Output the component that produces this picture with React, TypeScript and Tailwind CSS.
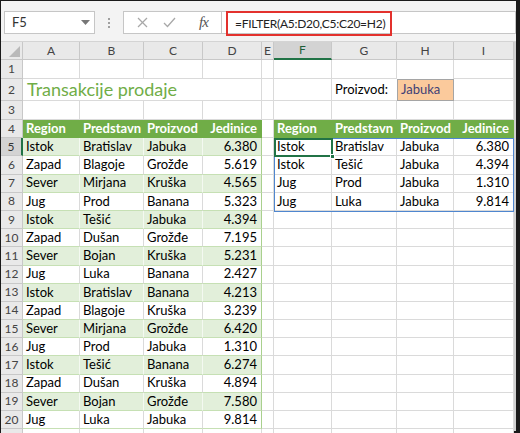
import React from "react"

const colW = [
  "w-[57px]",
  "w-[64px]",
  "w-[59px]",
  "w-[59px]",
  "w-[12px]",
  "w-[58px]",
  "w-[65px]",
  "w-[57px]",
  "w-[60px]",
]
const letters = ["A", "B", "C", "D", "E", "F", "G", "H", "I"]

const sales = [
  ["Istok", "Bratislav", "Jabuka", "6.380"],
  ["Zapad", "Blagoje", "Grožđe", "5.619"],
  ["Sever", "Mirjana", "Kruška", "4.565"],
  ["Jug", "Prod", "Banana", "5.323"],
  ["Istok", "Tešić", "Jabuka", "4.394"],
  ["Zapad", "Dušan", "Grožđe", "7.195"],
  ["Sever", "Bojan", "Kruška", "5.231"],
  ["Jug", "Luka", "Banana", "2.427"],
  ["Istok", "Bratislav", "Banana", "4.213"],
  ["Zapad", "Blagoje", "Kruška", "3.239"],
  ["Sever", "Mirjana", "Grožđe", "6.420"],
  ["Jug", "Prod", "Jabuka", "1.310"],
  ["Istok", "Tešić", "Banana", "6.274"],
  ["Zapad", "Dušan", "Kruška", "4.894"],
  ["Sever", "Bojan", "Grožđe", "7.580"],
  ["Jug", "Luka", "Jabuka", "9.814"],
]

const filtered = sales.filter((r) => r[2] === "Jabuka")

// header text is cut by the next column in the sheet, so only the visible part
const headers = ["Region", "Predstavn", "Proizvod", "Jedinice"]

function RowHead({ n, selected }: { n?: number; selected?: boolean }) {
  return (
    <div
      className={
        selected
          ? "w-[22px] shrink-0 flex items-center justify-center bg-[#d3d3d3] border-b border-b-[#c8c8c8] border-r-2 border-r-[#217346] text-[#333] text-[12px]"
          : "w-[22px] shrink-0 flex items-center justify-center bg-[#e9e9e9] border-b border-r border-b-[#c8c8c8] border-r-[#c8c8c8] text-[#444] text-[12px]"
      }
    >
      {n}
    </div>
  )
}

function Cell({
  i,
  cls = "bg-white border-r-[#dadada] border-b-[#dadada]",
  right,
  bottom,
  children,
}: {
  i: number
  cls?: string
  right?: boolean
  bottom?: boolean
  children?: React.ReactNode
}) {
  return (
    <div
      className={`${colW[i]} shrink-0 flex border-r border-b whitespace-nowrap overflow-hidden ${
        bottom ? "items-end pb-[1px]" : "items-center"
      } ${right ? "justify-end pr-[4px]" : "pl-[3px]"} ${cls}`}
    >
      {children}
    </div>
  )
}

function Row({ h, children }: { h: string; children: React.ReactNode }) {
  return <div className={`flex ${h}`}>{children}</div>
}

export default function App() {
  return (
    <div className="w-[520px] h-[433px] overflow-hidden bg-[#1a1a1a] pl-px pt-px pr-[4px] pb-[2px] font-['Lato','Liberation_Sans',sans-serif] text-[13px] text-black">
      <div className="bg-white h-full flex flex-col">
        {/* formula bar */}
        <div className="h-[41px] shrink-0 bg-[#f3f3f3] border-b border-[#d4d4d4] flex items-start pt-[10px] pl-[3px]">
          <div className="w-[91px] h-[23px] bg-white border border-[#c6c6c6] flex items-center justify-between pl-[7px] pr-[4px] text-[#333]">
            <span>F5</span>
            <svg width="9" height="5" viewBox="0 0 9 5">
              <polygon points="0,0 9,0 4.5,5" fill="#777" />
            </svg>
          </div>
          <div className="w-[28px] h-[23px] flex flex-col items-center justify-center gap-[2px]">
            <span className="w-[2px] h-[2px] bg-[#a0a0a0]" />
            <span className="w-[2px] h-[2px] bg-[#a0a0a0]" />
            <span className="w-[2px] h-[2px] bg-[#a0a0a0]" />
          </div>
          <div className="w-[99px] h-[23px] bg-white border border-[#c6c6c6] flex items-center pl-[13px] gap-[15px]">
            <svg width="11" height="11" viewBox="0 0 11 11" stroke="#a8a8a8" strokeWidth="1.3">
              <line x1="1" y1="1" x2="10" y2="10" />
              <line x1="10" y1="1" x2="1" y2="10" />
            </svg>
            <svg width="13" height="11" viewBox="0 0 13 11" fill="none" stroke="#a8a8a8" strokeWidth="1.3">
              <polyline points="1,6 4.5,9.5 12,1" />
            </svg>
            <span className="ml-[8px] font-['Liberation_Serif',serif] italic text-[15px] text-[#555] tracking-[-1px]">fx</span>
          </div>
          <div className="flex-1 h-[23px] bg-white border border-l-0 border-[#c6c6c6] flex items-start pl-[4px]">
            <div className="w-[166px] h-[25px] -mt-px border-2 border-[#e3312d] flex items-center pl-[7px] text-[12px] tracking-[-0.25px] text-[#222]">
              =FILTER(A5:D20,C5:C20=H2)
            </div>
          </div>
        </div>

        <div className="flex flex-1 min-h-0">
          <div className="relative w-[513px] shrink-0">
            {/* column headers */}
            <Row h="h-[18px]">
              <div className="w-[22px] shrink-0 bg-[#e9e9e9] border-r border-b border-[#c8c8c8] flex items-end justify-end p-[2px]">
                <svg width="11" height="11" viewBox="0 0 11 11">
                  <polygon points="11,0 11,11 0,11" fill="#b9b9b9" />
                </svg>
              </div>
              {letters.map((l, i) => (
                <div
                  key={l}
                  className={`${colW[i]} shrink-0 flex items-center justify-center text-[12px] ${
                    l === "F"
                      ? "bg-[#d3d3d3] border-r border-r-[#c8c8c8] border-b-2 border-b-[#217346] text-[#1e5e38]"
                      : "bg-[#e9e9e9] border-r border-b border-[#c8c8c8] text-[#444]"
                  }`}
                >
                  {l}
                </div>
              ))}
            </Row>

            {/* row 1 */}
            <Row h="h-[19px]">
              <RowHead n={1} />
              {letters.map((l, i) => (
                <Cell key={l} i={i} cls={l === "H" ? "bg-white border-r-[#dadada] border-b-0" : undefined} />
              ))}
            </Row>

            {/* row 2 */}
            <Row h="h-[22px]">
              <RowHead n={2} />
              <div className="w-[180px] shrink-0 flex items-end pl-[4px] border-b border-[#dadada] text-[#70ad47] text-[18px] leading-[22px] whitespace-nowrap">
                Transakcije prodaje
              </div>
              <Cell i={3} />
              <Cell i={4} />
              <Cell i={5} />
              <Cell i={6} bottom cls="bg-white border-r-0 border-b-[#dadada]">
                Proizvod:
              </Cell>
              <Cell i={7} bottom cls="bg-[#fbca9c] border-l border-t border-[#a5a5a5] text-[#3f3f76]">
                Jabuka
              </Cell>
              <Cell i={8} />
            </Row>

            {/* row 3 */}
            <Row h="h-[19px]">
              <RowHead n={3} />
              {letters.map((l, i) => (
                <Cell key={l} i={i} />
              ))}
            </Row>

            {/* row 4 - table headers */}
            <Row h="h-[18.2px]">
              <RowHead n={4} />
              {headers.map((t, i) => (
                <Cell key={"l" + t} i={i} right={i === 3} cls="bg-[#70ad47] border-r-[#70ad47] border-b-[#70ad47] text-white font-bold">
                  {t}
                </Cell>
              ))}
              <Cell i={4} />
              {headers.map((t, i) => (
                <Cell key={"r" + t} i={i + 5} right={i === 3} cls="bg-[#70ad47] border-r-[#70ad47] border-b-[#70ad47] text-white font-bold">
                  {t}
                </Cell>
              ))}
            </Row>

            {/* rows 5-20 */}
            {sales.map((r, idx) => {
              const band = idx % 2 === 0
              const res = filtered[idx]
              return (
                <Row key={idx} h="h-[18.2px]">
                  <RowHead n={idx + 5} selected={idx === 0} />
                  {r.map((v, i) => (
                    <Cell
                      key={i}
                      i={i}
                      right={i === 3}
                      cls={
                        i === 3
                          ? band
                            ? "bg-[#e2efda] border-r-[#a9d08e] border-b-[#c6e0b4]"
                            : "bg-white border-r-[#a9d08e] border-b-[#c6e0b4]"
                          : band
                          ? "bg-[#e2efda] border-r-[#f4f9f1] border-b-[#c6e0b4]"
                          : "bg-white border-r-[#dadada] border-b-[#c6e0b4]"
                      }
                    >
                      {v}
                    </Cell>
                  ))}
                  <Cell i={4} />
                  {[0, 1, 2, 3].map((i) => (
                    <Cell key={"f" + i} i={i + 5} right={i === 3}>
                      {res ? res[i] : null}
                    </Cell>
                  ))}
                </Row>
              )
            })}

            {/* row 21, only a sliver shows */}
            <Row h="h-[18.2px]">
              <RowHead />
              {letters.map((l, i) => (
                <Cell key={l} i={i} />
              ))}
            </Row>

            {/* spill range outline */}
            <div className="absolute left-[273px] top-[96.2px] w-[240px] h-[73.8px] border border-[#4f86cf] pointer-events-none" />
            {/* active cell */}
            <div className="absolute left-[273px] top-[95.5px] w-[59px] h-[19.5px] border-2 border-[#217346] pointer-events-none">
              <span className="absolute -right-[4px] -bottom-[4px] w-[5px] h-[5px] bg-[#217346] border border-white" />
            </div>
          </div>
          <div className="w-[2px] bg-[#d0d0d0]" />
        </div>
      </div>
    </div>
  )
}
